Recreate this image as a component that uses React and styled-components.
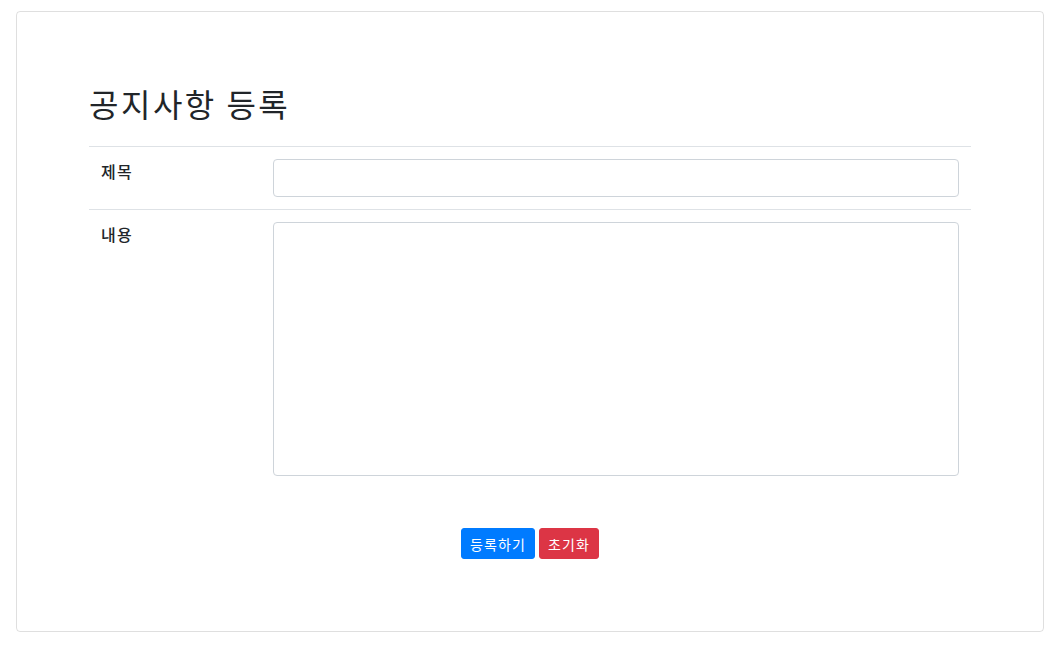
import styled, { createGlobalStyle } from "styled-components";

const GlobalStyle = createGlobalStyle`
  body {
    margin: 0;
    background: #fff;
    color: #212529;
    font-family: "Noto Sans CJK KR", "Noto Sans", sans-serif;
    font-size: 16px;
    line-height: 1.5;
  }
`;

const Page = styled.div`
  padding: 11px 19px 0 16px;
`;

const Card = styled.div`
  border: 1px solid rgba(0, 0, 0, 0.125);
  border-radius: 4px;
  padding: 72px 72px 72px;
`;

const Title = styled.h2`
  margin: 0 0 24px;
  font-size: 32px;
  font-weight: 400;
  line-height: 1.2;
  letter-spacing: 2.5px;
`;

const FormTable = styled.table`
  width: 100%;
  border-collapse: collapse;
`;

const Row = styled.tr`
  border-top: 1px solid #dee2e6;
`;

const Label = styled.th`
  width: 148px;
  padding: 12px;
  text-align: left;
  vertical-align: top;
  font-weight: 500;
  line-height: 1.5;
  letter-spacing: 1.2px;
`;

const Cell = styled.td`
  padding: 12px;
  vertical-align: top;
`;

const TextInput = styled.input`
  display: block;
  box-sizing: border-box;
  width: 100%;
  height: 38px;
  border: 1px solid #ced4da;
  border-radius: 4px;
  font: inherit;
`;

const TextArea = styled.textarea`
  display: block;
  box-sizing: border-box;
  width: 100%;
  height: 254px;
  border: 1px solid #ced4da;
  border-radius: 4px;
  font: inherit;
  resize: none;
`;

const Actions = styled.div`
  display: flex;
  justify-content: center;
  gap: 4px;
  margin-top: 40px;
`;

const Button = styled.button`
  height: 31px;
  padding: 0 8px;
  border: 1px solid ${(p) => p.$color};
  border-radius: 3px;
  background: ${(p) => p.$color};
  color: #fff;
  font-family: "Noto Sans CJK KR", sans-serif;
  font-size: 14px;
  line-height: 1;
  letter-spacing: 1.1px;
`;

export default function App() {
  return (
    <Page>
      <GlobalStyle />
      <Card>
        <Title>공지사항 등록</Title>
        <FormTable>
          <tbody>
            <Row>
              <Label>제목</Label>
              <Cell>
                <TextInput type="text" />
              </Cell>
            </Row>
            <Row>
              <Label>내용</Label>
              <Cell>
                <TextArea />
              </Cell>
            </Row>
          </tbody>
        </FormTable>
        <Actions>
          <Button $color="#007bff">등록하기</Button>
          <Button $color="#dc3545">초기화</Button>
        </Actions>
      </Card>
    </Page>
  );
}
